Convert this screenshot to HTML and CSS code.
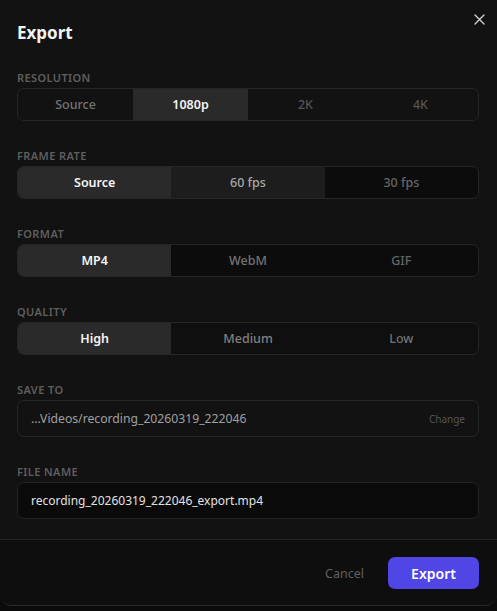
FILE: index.html
```html
<!DOCTYPE html>
<html lang="en">
<head>
<meta charset="utf-8">
<title>Export</title>
<link rel="stylesheet" href="styles.css">
</head>
<body>
<div class="dialog">
  <div class="header">
    <h1 class="title">Export</h1>
    <button class="close" aria-label="Close">
      <svg width="11" height="11" viewBox="0 0 11 11"><path d="M1 1L10 10M10 1L1 10" stroke="#d0d0d0" stroke-width="1.4" stroke-linecap="round"/></svg>
    </button>
  </div>
  <div class="body">
    <section class="field">
      <div class="label">Resolution</div>
      <div class="seg">
        <div class="opt bg-base c-77">Source</div>
        <div class="opt active">1080p</div>
        <div class="opt bg-base c-55">2K</div>
        <div class="opt bg-base c-55">4K</div>
      </div>
    </section>
    <section class="field">
      <div class="label">Frame Rate</div>
      <div class="seg">
        <div class="opt active">Source</div>
        <div class="opt bg-hover c-aa">60 fps</div>
        <div class="opt bg-dark c-66">30 fps</div>
      </div>
    </section>
    <section class="field">
      <div class="label">Format</div>
      <div class="seg">
        <div class="opt active">MP4</div>
        <div class="opt bg-dark c-77">WebM</div>
        <div class="opt bg-dark c-66">GIF</div>
      </div>
    </section>
    <section class="field">
      <div class="label">Quality</div>
      <div class="seg">
        <div class="opt active">High</div>
        <div class="opt bg-mid c-88">Medium</div>
        <div class="opt bg-mid c-77">Low</div>
      </div>
    </section>
    <section class="field">
      <div class="label">Save To</div>
      <div class="path">
        <span class="path-text">...Videos/recording_20260319_222046</span>
        <span class="change">Change</span>
      </div>
    </section>
    <section class="field">
      <div class="label">File Name</div>
      <div class="filename">recording_20260319_222046_export.mp4</div>
    </section>
  </div>
  <div class="footer">
    <button class="cancel">Cancel</button>
    <button class="export">Export</button>
  </div>
</div>
</body>
</html>
```
FILE: styles.css
```css
* { box-sizing: border-box; }
html, body { margin: 0; padding: 0; }
body {
  background: #0b0b0b;
  font-family: "Noto Sans", "Open Sans", sans-serif;
  color: #e8e8e8;
  width: 497px;
  height: 611px;
  overflow: hidden;
}
.dialog {
  background: #121212;
  border-bottom: 1px solid #2a2a2a;
  border-radius: 0 0 12px 12px;
  overflow: hidden;
}
.header {
  position: relative;
  padding: 21px 18px 0 17px;
}
.title {
  margin: 0;
  font-size: 17px;
  line-height: 24px;
  font-weight: 700;
  color: #f2f2f2;
}
.close {
  position: absolute;
  top: 14px;
  right: 12px;
  width: 11px;
  height: 11px;
  padding: 0;
  border: 0;
  background: none;
  display: flex;
}
.body {
  padding: 26px 18px 20px 17px;
  border-bottom: 1px solid #222;
  display: flex;
  flex-direction: column;
  gap: 28px;
}
.field { display: flex; flex-direction: column; gap: 3px; }
.label {
  font-size: 11px;
  line-height: 14px;
  font-weight: 600;
  letter-spacing: 0.4px;
  text-transform: uppercase;
  color: #5e5e5e;
}
.seg {
  display: grid;
  grid-auto-flow: column;
  grid-auto-columns: 1fr;
  height: 33px;
  border: 1px solid #262626;
  border-radius: 7px;
  overflow: hidden;
}
.opt {
  display: flex;
  align-items: center;
  justify-content: center;
  font-size: 12.5px;
  font-weight: 500;
}
.opt.active { background: #2a2a2a; color: #f4f4f4; font-weight: 600; }
.bg-base { background: #121212; }
.bg-hover { background: #1d1d1d; }
.bg-dark { background: #0c0c0c; }
.bg-mid { background: #0f0f0f; }
.c-55 { color: #555; }
.c-66 { color: #666; }
.c-77 { color: #737373; }
.c-88 { color: #808080; }
.c-aa { color: #a8a8a8; }
.path {
  height: 37px;
  border: 1px solid #262626;
  border-radius: 7px;
  background: #121212;
  display: flex;
  align-items: center;
  justify-content: space-between;
  padding: 0 13px 0 13px;
}
.path-text { font-size: 12.2px; color: #a0a0a0; }
.change { font-size: 10px; color: #555; }
.filename {
  height: 37px;
  border: 1px solid #222;
  border-radius: 7px;
  background: #0a0a0a;
  display: flex;
  align-items: center;
  padding: 0 13px;
  font-size: 12px;
  color: #e2e2e2;
}
.footer {
  background: #0e0e0e;
  display: flex;
  justify-content: flex-end;
  align-items: center;
  gap: 12px;
  padding: 17px 18px 16px 17px;
}
.footer button { font-family: inherit; border: 0; cursor: pointer; }
.cancel {
  background: none;
  color: #606060;
  font-size: 12.5px;
  padding: 0 12px;
  height: 32px;
}
.export {
  background: #4f46e5;
  color: #fff;
  font-size: 14px;
  font-weight: 600;
  height: 32px;
  width: 91px;
  border-radius: 7px;
}
```
